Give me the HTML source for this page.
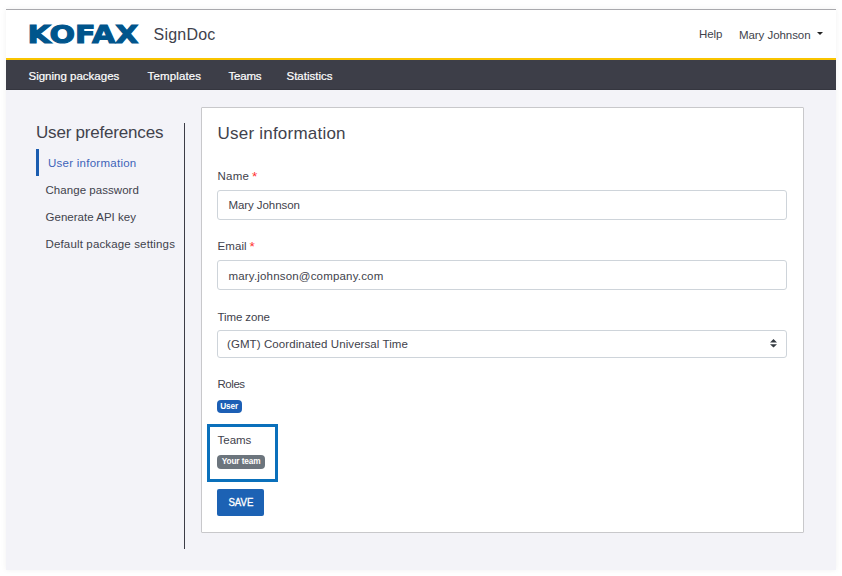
<!DOCTYPE html>
<html lang="en">
<head>
<meta charset="utf-8">
<title>SignDoc - User preferences</title>
<style>
html,body{margin:0;padding:0;background:#fff;}
body{width:842px;height:576px;position:relative;overflow:hidden;font-family:"Liberation Sans",sans-serif;font-size:11.5px;color:#41424c;}
.t{position:absolute;white-space:nowrap;line-height:20px;}
#app{position:absolute;left:6px;top:9px;width:830px;height:561px;background:#f3f3f8;box-shadow:0 0 6px rgba(0,0,0,.06);}
#topline{position:absolute;left:0;top:0;width:830px;height:1px;background:#a9a9ad;}
#header{position:absolute;left:0;top:1px;width:830px;height:48px;background:#fff;}
#yellow{position:absolute;left:0;top:49px;width:830px;height:2px;background:#f9c400;}
#nav{position:absolute;left:0;top:51px;width:830px;height:30px;background:#3d3e48;color:#fff;box-shadow:inset 0 -1px 0 rgba(0,0,0,.12);-webkit-text-stroke:0.2px #fff;}
#divider{position:absolute;left:178px;top:114px;width:1px;height:426px;background:#3b3c46;}
#bar{position:absolute;left:30px;top:140px;width:3px;height:27px;background:#1a5cb0;}
#card{position:absolute;left:195px;top:98px;width:601px;height:424px;background:#fff;border:1px solid #c8c8cb;border-radius:1px;}
.inp{position:absolute;left:211px;width:568px;box-sizing:border-box;width:570px;background:#fff;border:1px solid #ced4da;border-radius:3px;}
.badge{position:absolute;height:13px;border-radius:4px;color:#fff;font-weight:bold;font-size:9.4px;line-height:13px;text-align:center;letter-spacing:-0.1px;}
.badge span{display:inline-block;transform:scaleX(0.88);transform-origin:50% 50%;position:relative;top:-0.8px;}
#hl{position:absolute;left:201px;top:415px;width:65px;height:52px;border:3px solid #0a70bb;}
#save{position:absolute;left:211px;top:480px;width:47px;height:27px;background:#1c62b4;border-radius:2px;color:#fff;text-align:center;line-height:27px;font-size:11.5px;}
#save span{display:inline-block;transform:scaleX(0.84);-webkit-text-stroke:0.35px #fff;}
.red{color:#ff3030;font-size:13.5px;line-height:0;position:relative;top:0.5px;left:-0.7px;}
</style>
</head>
<body>
<div id="app">
  <div id="topline"></div>
  <div id="header">
    <svg id="logo" style="position:absolute;left:22px;top:13px" width="112" height="22" viewBox="0 0 112 22">
      <text x="-0.5" y="19.6" textLength="111" lengthAdjust="spacingAndGlyphs" font-family="DejaVu Sans, Liberation Sans, sans-serif" font-weight="bold" font-size="25" fill="#00558c" stroke="#00558c" stroke-width="1.1">KOFAX</text>
    </svg>
    <span class="t" style="left:147.6px;top:13px;font-size:16px;line-height:24px;letter-spacing:0.2px;">SignDoc</span>
    <span class="t" style="left:693px;top:14px;letter-spacing:-0.12px;">Help</span>
    <span class="t" style="left:733px;top:15px;letter-spacing:-0.06px;">Mary Johnson</span>
    <span style="position:absolute;left:811px;top:22px;width:0;height:0;border-left:3.5px solid transparent;border-right:3.5px solid transparent;border-top:3.5px solid #222;"></span>
  </div>
  <div id="yellow"></div>
  <div id="nav">
    <span class="t" style="left:22.5px;top:6px;letter-spacing:0px;">Signing packages</span>
    <span class="t" style="left:141.5px;top:6px;letter-spacing:0.15px;">Templates</span>
    <span class="t" style="left:222.5px;top:6px;letter-spacing:-0.2px;">Teams</span>
    <span class="t" style="left:280.5px;top:6px;letter-spacing:0px;">Statistics</span>
  </div>

  <span class="t" style="left:30px;top:112px;font-size:17px;line-height:24px;letter-spacing:-0.2px;">User preferences</span>
  <div id="bar"></div>
  <span class="t" style="left:42px;top:144px;color:#3d63b8;letter-spacing:0.26px;">User information</span>
  <span class="t" style="left:39.5px;top:171px;letter-spacing:0.05px;">Change password</span>
  <span class="t" style="left:39.5px;top:198px;letter-spacing:0.02px;">Generate API key</span>
  <span class="t" style="left:39.5px;top:225px;letter-spacing:0.15px;">Default package settings</span>
  <div id="divider"></div>

  <div id="card"></div>
  <span class="t" style="left:211.5px;top:113px;font-size:17px;line-height:24px;letter-spacing:0.22px;">User information</span>

  <span class="t" style="left:211.5px;top:157px;letter-spacing:0.25px;">Name <span class="red">*</span></span>
  <div class="inp" style="top:181px;height:30px;"></div>
  <span class="t" style="left:222.5px;top:186px;letter-spacing:-0.08px;">Mary Johnson</span>

  <span class="t" style="left:211.5px;top:227px;letter-spacing:0.1px;">Email <span class="red">*</span></span>
  <div class="inp" style="top:251px;height:30px;"></div>
  <span class="t" style="left:222.5px;top:257px;letter-spacing:0.18px;">mary.johnson@company.com</span>

  <span class="t" style="left:211.5px;top:298px;letter-spacing:-0.1px;">Time zone</span>
  <div class="inp" style="top:321px;height:28px;"></div>
  <span class="t" style="left:221px;top:325px;letter-spacing:0.085px;">(GMT) Coordinated Universal Time</span>
  <svg style="position:absolute;left:764px;top:330.4px" width="7" height="8.6" viewBox="0 0 4 5" preserveAspectRatio="none"><path fill="#343a40" d="M2 0L0 2h4zm0 5L0 3h4z"/></svg>

  <span class="t" style="left:211.5px;top:365px;letter-spacing:-0.45px;">Roles</span>
  <div class="badge" style="left:211px;top:391px;width:25px;background:#1c5fb5;"><span>User</span></div>

  <div id="hl"></div>
  <span class="t" style="left:211.5px;top:421px;letter-spacing:0px;">Teams</span>
  <div class="badge" style="left:211px;top:446px;width:48px;height:13.5px;background:#6c757d;"><span style="margin-left:-2px;margin-right:-2px">Your team</span></div>

  <div id="save"><span>SAVE</span></div>
</div>
</body>
</html>
